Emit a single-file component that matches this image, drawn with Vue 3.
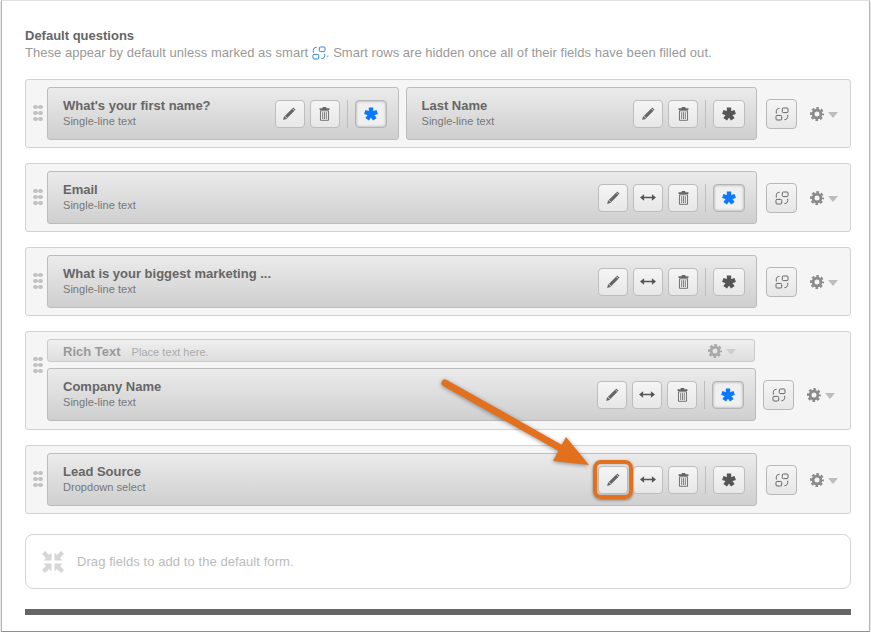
<script setup>
const rows = [
  { fields: [
    { title: "What's your first name?", sub: 'Single-line text', req: true, tools: ['pencil', 'trash'] },
    { title: 'Last Name', sub: 'Single-line text', req: false, tools: ['pencil', 'trash'] }
  ] },
  { fields: [{ title: 'Email', sub: 'Single-line text', req: true, tools: ['pencil', 'arrows', 'trash'] }] },
  { fields: [{ title: 'What is your biggest marketing ...', sub: 'Single-line text', req: false, tools: ['pencil', 'arrows', 'trash'] }] },
  { rich: true, fields: [{ title: 'Company Name', sub: 'Single-line text', req: true, tools: ['pencil', 'arrows', 'trash'] }] },
  { mark: true, fields: [{ title: 'Lead Source', sub: 'Dropdown select', req: false, tools: ['pencil', 'arrows', 'trash'] }] }
]
</script>

<template>
  <svg class="defs" aria-hidden="true">
    <symbol id="i-pencil" viewBox="0 0 16 16">
      <path d="M1.200 14.800l.9-3.400L12 1.500l2.500 2.500-9.900 9.900z" fill="#666" />
      <path d="M3 10.700l2.300 2.300M10.900 2.700l2.400 2.400" stroke="#e8e8e8" stroke-width=".9" fill="none" />
    </symbol>
    <symbol id="i-arrows" viewBox="0 0 18 10">
      <path d="M0 5l4.600-3.600v2.800h8.800V1.400L18 5l-4.600 3.600V5.800H4.600v2.800z" fill="#555" />
    </symbol>
    <symbol id="i-trash" viewBox="0 0 12 16">
      <path d="M4 2.200V1h4v1.200h3.400v2H.6v-2z" fill="#666" />
      <path d="M1.600 5h8.800v10.400H1.600z" fill="#ececec" stroke="#666" />
      <path d="M4 6.500v7.500M6 6.500v7.500M8 6.500v7.500" stroke="#777" />
    </symbol>
    <symbol id="i-star" viewBox="0 0 16 16">
      <path d="M8 8V.5M8 8l7.100-2.300M8 8l4.400 6.100M8 8l-4.400 6.100M8 8L.9 5.700" stroke="currentColor" stroke-width="5" fill="none" />
    </symbol>
    <symbol id="i-smart" viewBox="0 0 14 14">
      <g fill="none" stroke="currentColor" stroke-width="1">
        <rect x="7.300" y="1" width="5.700" height="4.600" rx="1" />
        <rect x="1" y="8.400" width="5.700" height="4.600" rx="1" />
        <path d="M1.300 6.600V4.400C1.300 2.600 2.400 1.300 4.600 1.300" />
        <path d="M12.700 7.800v1.800c0 1.800-1.100 3-3.300 3.100" />
      </g>
    </symbol>
    <symbol id="i-gear" viewBox="0 0 14 14">
      <circle cx="7" cy="7" r="3.900" fill="none" stroke="currentColor" stroke-width="2.800" />
      <circle cx="7" cy="7" r="6" fill="none" stroke="currentColor" stroke-width="2" stroke-dasharray="2.700 2.010" stroke-dashoffset="1.350" />
    </symbol>
  </svg>

  <div class="window">
    <h2 class="heading">Default questions</h2>
    <p class="intro">These appear by default unless marked as smart <svg class="intro-icon"><use href="#i-smart" /></svg>. Smart rows are hidden once all of their fields have been filled out.</p>

    <section v-for="(row, r) in rows" :key="r" class="row" :class="{ 'row-rich': row.rich }">
      <div class="handle"><i v-for="d in 6" :key="d"></i></div>
      <div class="stack">
        <div v-if="row.rich" class="rich">
          <strong>Rich Text</strong><span>Place text here.</span>
          <div class="gear-wrap pale"><svg class="gear"><use href="#i-gear" /></svg><b class="caret"></b></div>
        </div>
        <div class="fields">
          <div v-for="f in row.fields" :key="f.title" class="field">
            <div class="label">
              <div class="title">{{ f.title }}</div>
              <div class="sub">{{ f.sub }}</div>
            </div>
            <div class="tools">
              <button v-for="t in f.tools" :key="t" class="tool" :class="{ marked: row.mark && t === 'pencil' }">
                <svg :class="'ic-' + t"><use :href="'#i-' + t" /></svg>
              </button>
              <span class="divider"></span>
              <button class="tool star" :class="{ on: f.req }"><svg class="ic-star"><use href="#i-star" /></svg></button>
            </div>
          </div>
        </div>
      </div>
      <div class="tail">
        <button class="smart"><svg class="ic-smart"><use href="#i-smart" /></svg></button>
        <div class="gear-wrap"><svg class="gear"><use href="#i-gear" /></svg><b class="caret"></b></div>
      </div>
    </section>

    <div class="drop">
      <svg class="drop-icon" viewBox="0 0 22 22">
        <path d="M0 3l3-3 4 4 2.500-2.500V9.500H1.500L4 7zM22 3l-3-3-4 4-2.500-2.500V9.500h8L18 7zM0 19l3 3 4-4 2.500 2.500V12.500H1.500L4 15zM22 19l-3 3-4-4-2.500 2.500V12.500h8L18 15z" fill="#d6d6d6" />
      </svg>
      <span>Drag fields to add to the default form.</span>
    </div>
    <div class="bar"></div>

    <svg class="pointer" viewBox="0 0 160 100">
      <path d="M3 3L129 74" stroke="#e2701d" stroke-width="7" stroke-linecap="round" fill="none" />
      <path d="M147 85L124 57L111 81z" fill="#e2701d" />
    </svg>
  </div>
</template>

<style>
html, body { margin: 0; background: #fff; }
</style>

<style scoped>
.defs { position: absolute; width: 0; height: 0; }
.window {
  position: relative;
  box-sizing: border-box;
  width: 869px;
  height: 632px;
  margin-left: 1px;
  padding: 27px 18px 0 23px;
  background: #fff;
  border-left: 1px solid #b5b5b5;
  border-right: 1px solid #b5b5b5;
  border-top: 1px solid #e2e2e2;
  border-bottom: 1px solid #8f8f8f;
  box-shadow: 0 1px 2px rgba(0, 0, 0, .3);
  font-family: "Liberation Sans", Arial, sans-serif;
}
.heading { margin: 0; font-size: 13px; line-height: 16px; font-weight: bold; color: #666; }
.intro { margin: 0 0 17px; font-size: 13px; line-height: 18px; letter-spacing: .03px; color: #999; white-space: nowrap; }
.intro-icon { width: 14px; height: 14px; vertical-align: -3px; color: #2f86dc; }
.row {
  box-sizing: border-box;
  display: flex;
  margin-bottom: 15px;
  padding: 7px 0 7px 6px;
  background: #f5f5f5;
  border: 1px solid #d2d2d2;
  border-radius: 3px;
}
.row-rich { padding-bottom: 8px; }
.handle {
  display: grid;
  grid-template-columns: 4px 4px;
  gap: 2px 1px;
  width: 15px;
  margin-top: 18px;
  padding-left: 1px;
  box-sizing: border-box;
  align-self: flex-start;
  flex: none;
}
.handle i { width: 4.500px; height: 4px; border-radius: 50%; background: #c2c2c2; }
.stack { flex: 1; display: flex; flex-direction: column; gap: 6px; min-width: 0; }
.fields { display: flex; gap: 7px; }
.field {
  box-sizing: border-box;
  flex: 1;
  height: 53px;
  display: flex;
  align-items: center;
  justify-content: space-between;
  padding: 0 11px 0 15px;
  background: linear-gradient(#ebebeb, #cfcfcf);
  border: 1px solid #bcbcbc;
  border-radius: 3px;
}
.label { margin-top: -1px; }
.title { font-size: 13px; line-height: 16px; font-weight: bold; color: #666; }
.sub { font-size: 11px; line-height: 14px; letter-spacing: .04px; color: #777; }
.tools { display: flex; align-items: center; gap: 5px; }
.tool {
  position: relative;
  box-sizing: border-box;
  width: 30px;
  height: 28px;
  padding: 0;
  display: flex;
  align-items: center;
  justify-content: center;
  background: linear-gradient(#f5f5f5, #e7e7e7);
  border: 1px solid #bdbdbd;
  border-radius: 4px;
}
.tool.star { width: 32px; color: #555; }
.tool.star.on {
  color: #0a78ff;
  background: #f0f0f0;
  border-color: #b4b4b4;
  box-shadow: inset 0 0 3px rgba(0, 0, 0, .35);
}
.tool.marked::after {
  content: "";
  position: absolute;
  inset: -7px -6px -6px -6px;
  border: 4px solid #e2701d;
  border-radius: 8px;
  box-shadow: 0 1px 3px rgba(0, 0, 0, .45), inset 0 0 2px rgba(0, 0, 0, .3);
}
.divider { width: 1px; height: 28px; margin: 0 2px; background: #bdbdbd; }
.ic-pencil { width: 15px; height: 15px; }
.ic-arrows { width: 16px; height: 9px; }
.ic-trash { width: 11px; height: 15px; }
.ic-star { width: 14px; height: 14px; }
.tail {
  flex: none;
  box-sizing: border-box;
  width: 93px;
  height: 53px;
  align-self: flex-end;
  display: flex;
  align-items: center;
  padding-left: 9px;
}
.row-rich .tail { width: 94px; padding-left: 7px; }
.smart {
  box-sizing: border-box;
  width: 31px;
  height: 30px;
  padding: 0;
  display: flex;
  align-items: center;
  justify-content: center;
  color: #666;
  background: linear-gradient(#f5f5f5, #e6e6e6);
  border: 1px solid #b8b8b8;
  border-radius: 4px;
}
.ic-smart { width: 14px; height: 14px; }
.gear-wrap { display: flex; align-items: center; margin-left: 13px; color: #8a8a8a; }
.gear { width: 14px; height: 14px; }
.caret {
  width: 0;
  height: 0;
  margin: 2px 0 0 4px;
  border-left: 5px solid transparent;
  border-right: 5px solid transparent;
  border-top: 6px solid #bdbdbd;
}
.rich {
  box-sizing: border-box;
  height: 23px;
  margin-right: 1px;
  display: flex;
  align-items: center;
  padding: 2px 18px 0 15px;
  background: linear-gradient(#efefef, #dedede);
  border: 1px solid #cbcbcb;
  border-radius: 3px;
}
.rich strong { font-size: 13px; color: #999; }
.rich span { font-size: 11px; letter-spacing: .04px; color: #aaa; margin-left: 11px; }
.rich .gear-wrap { margin-left: auto; margin-top: -2px; color: #a8a8a8; }
.rich .caret { border-top-color: #cdcdcd; }
.drop {
  box-sizing: border-box;
  height: 55px;
  display: flex;
  align-items: center;
  margin-top: 20px;
  padding-left: 16px;
  border: 1px solid #d5d5d5;
  border-radius: 8px;
  font-size: 13px;
  letter-spacing: .07px;
  color: #bbb;
}
.drop-icon { width: 22px; height: 22px; margin-right: 13px; }
.bar { height: 6px; margin-top: 20px; background: #666; }
.pointer {
  position: absolute;
  left: 440px;
  top: 379px;
  width: 160px;
  height: 100px;
  overflow: visible;
  filter: drop-shadow(0 1px 2px rgba(0, 0, 0, .4));
}
</style>
